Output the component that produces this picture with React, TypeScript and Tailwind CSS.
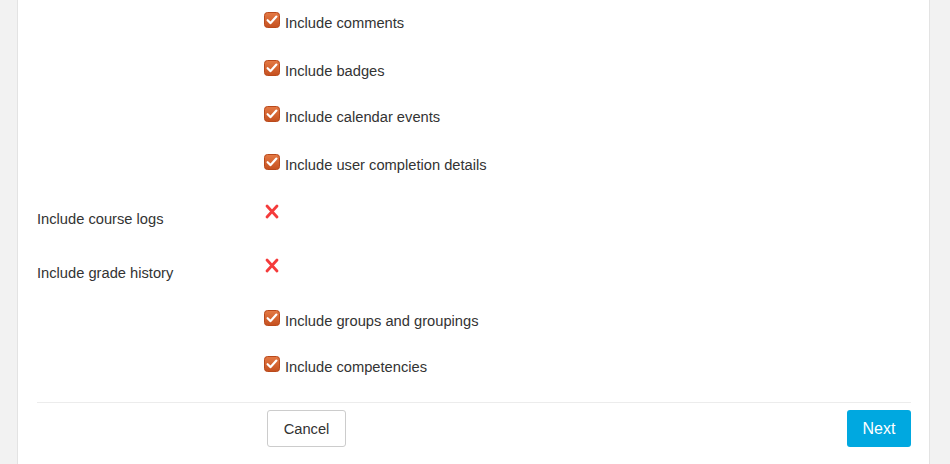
const checkedItems = {
  comments: "Include comments",
  badges: "Include badges",
  calendar: "Include calendar events",
  completion: "Include user completion details",
  groups: "Include groups and groupings",
  competencies: "Include competencies",
};

function CheckIcon() {
  return (
    <svg width="16" height="16" viewBox="0 0 16 16" className="shrink-0">
      <defs>
        <linearGradient id="cb" x1="0" y1="0" x2="0" y2="1">
          <stop offset="0" stopColor="#e47a45" />
          <stop offset="1" stopColor="#c5501f" />
        </linearGradient>
      </defs>
      <rect x="0.5" y="0.5" width="15" height="15" rx="3" fill="url(#cb)" stroke="#b9491b" />
      <path d="M3.6 8.2 L6.6 11.1 L12.4 4.6" fill="none" stroke="#fff" strokeWidth="2.2" strokeLinecap="round" strokeLinejoin="round" />
    </svg>
  );
}

function CrossIcon() {
  return (
    <svg width="14" height="15" viewBox="0 0 14 15" className="shrink-0">
      <path d="M2 2 L12 13 M12 2 L2 13" stroke="#f53b3b" strokeWidth="2.8" strokeLinecap="round" />
    </svg>
  );
}

function CheckRow({ label, height }: { label: string; height: string }) {
  return (
    <div className={`flex items-start ${height}`}>
      <div className="w-[227px] shrink-0" />
      <div className="flex items-start gap-[5px]">
        <CheckIcon />
        <span className="mt-[1px] leading-5">{label}</span>
      </div>
    </div>
  );
}

function CrossRow({ label, height }: { label: string; height: string }) {
  return (
    <div className={`flex items-start ${height}`}>
      <div className="w-[227px] shrink-0 pt-[5px] leading-5">{label}</div>
      <div className="pl-[1px]">
        <CrossIcon />
      </div>
    </div>
  );
}

export default function App() {
  return (
    <div className="flex h-[464px] w-[950px] overflow-hidden bg-[#f2f2f2] font-['Liberation_Sans',Arial,sans-serif] text-[14.7px] text-[#333]">
      <div className="ml-[17px] w-[913px] border-x border-[#e3e3e3] bg-white pl-[19px] pr-[18px]">
        <div className="pt-[12px]">
          <CheckRow label={checkedItems.comments} height="h-[48px]" />
          <CheckRow label={checkedItems.badges} height="h-[46px]" />
          <CheckRow label={checkedItems.calendar} height="h-[48px]" />
          <CheckRow label={checkedItems.completion} height="h-[50px]" />
          <CrossRow label="Include course logs" height="h-[54px]" />
          <CrossRow label="Include grade history" height="h-[52px]" />
          <CheckRow label={checkedItems.groups} height="h-[46px]" />
          <CheckRow label={checkedItems.competencies} height="h-[46px]" />
        </div>
        <div className="border-t border-[#ececec] pt-[7px]">
          <div className="flex items-center justify-between">
            <div className="flex">
              <div className="w-[230px] shrink-0" />
              <button className="h-[37px] w-[79px] rounded-[3px] border border-[#cccccc] bg-white pt-[1px] text-[14.7px] text-[#333]">
                Cancel
              </button>
            </div>
            <button className="h-[37px] w-[64px] rounded-[3px] bg-[#00a8e0] pt-[1px] text-[16px] text-white">
              Next
            </button>
          </div>
        </div>
      </div>
    </div>
  );
}
